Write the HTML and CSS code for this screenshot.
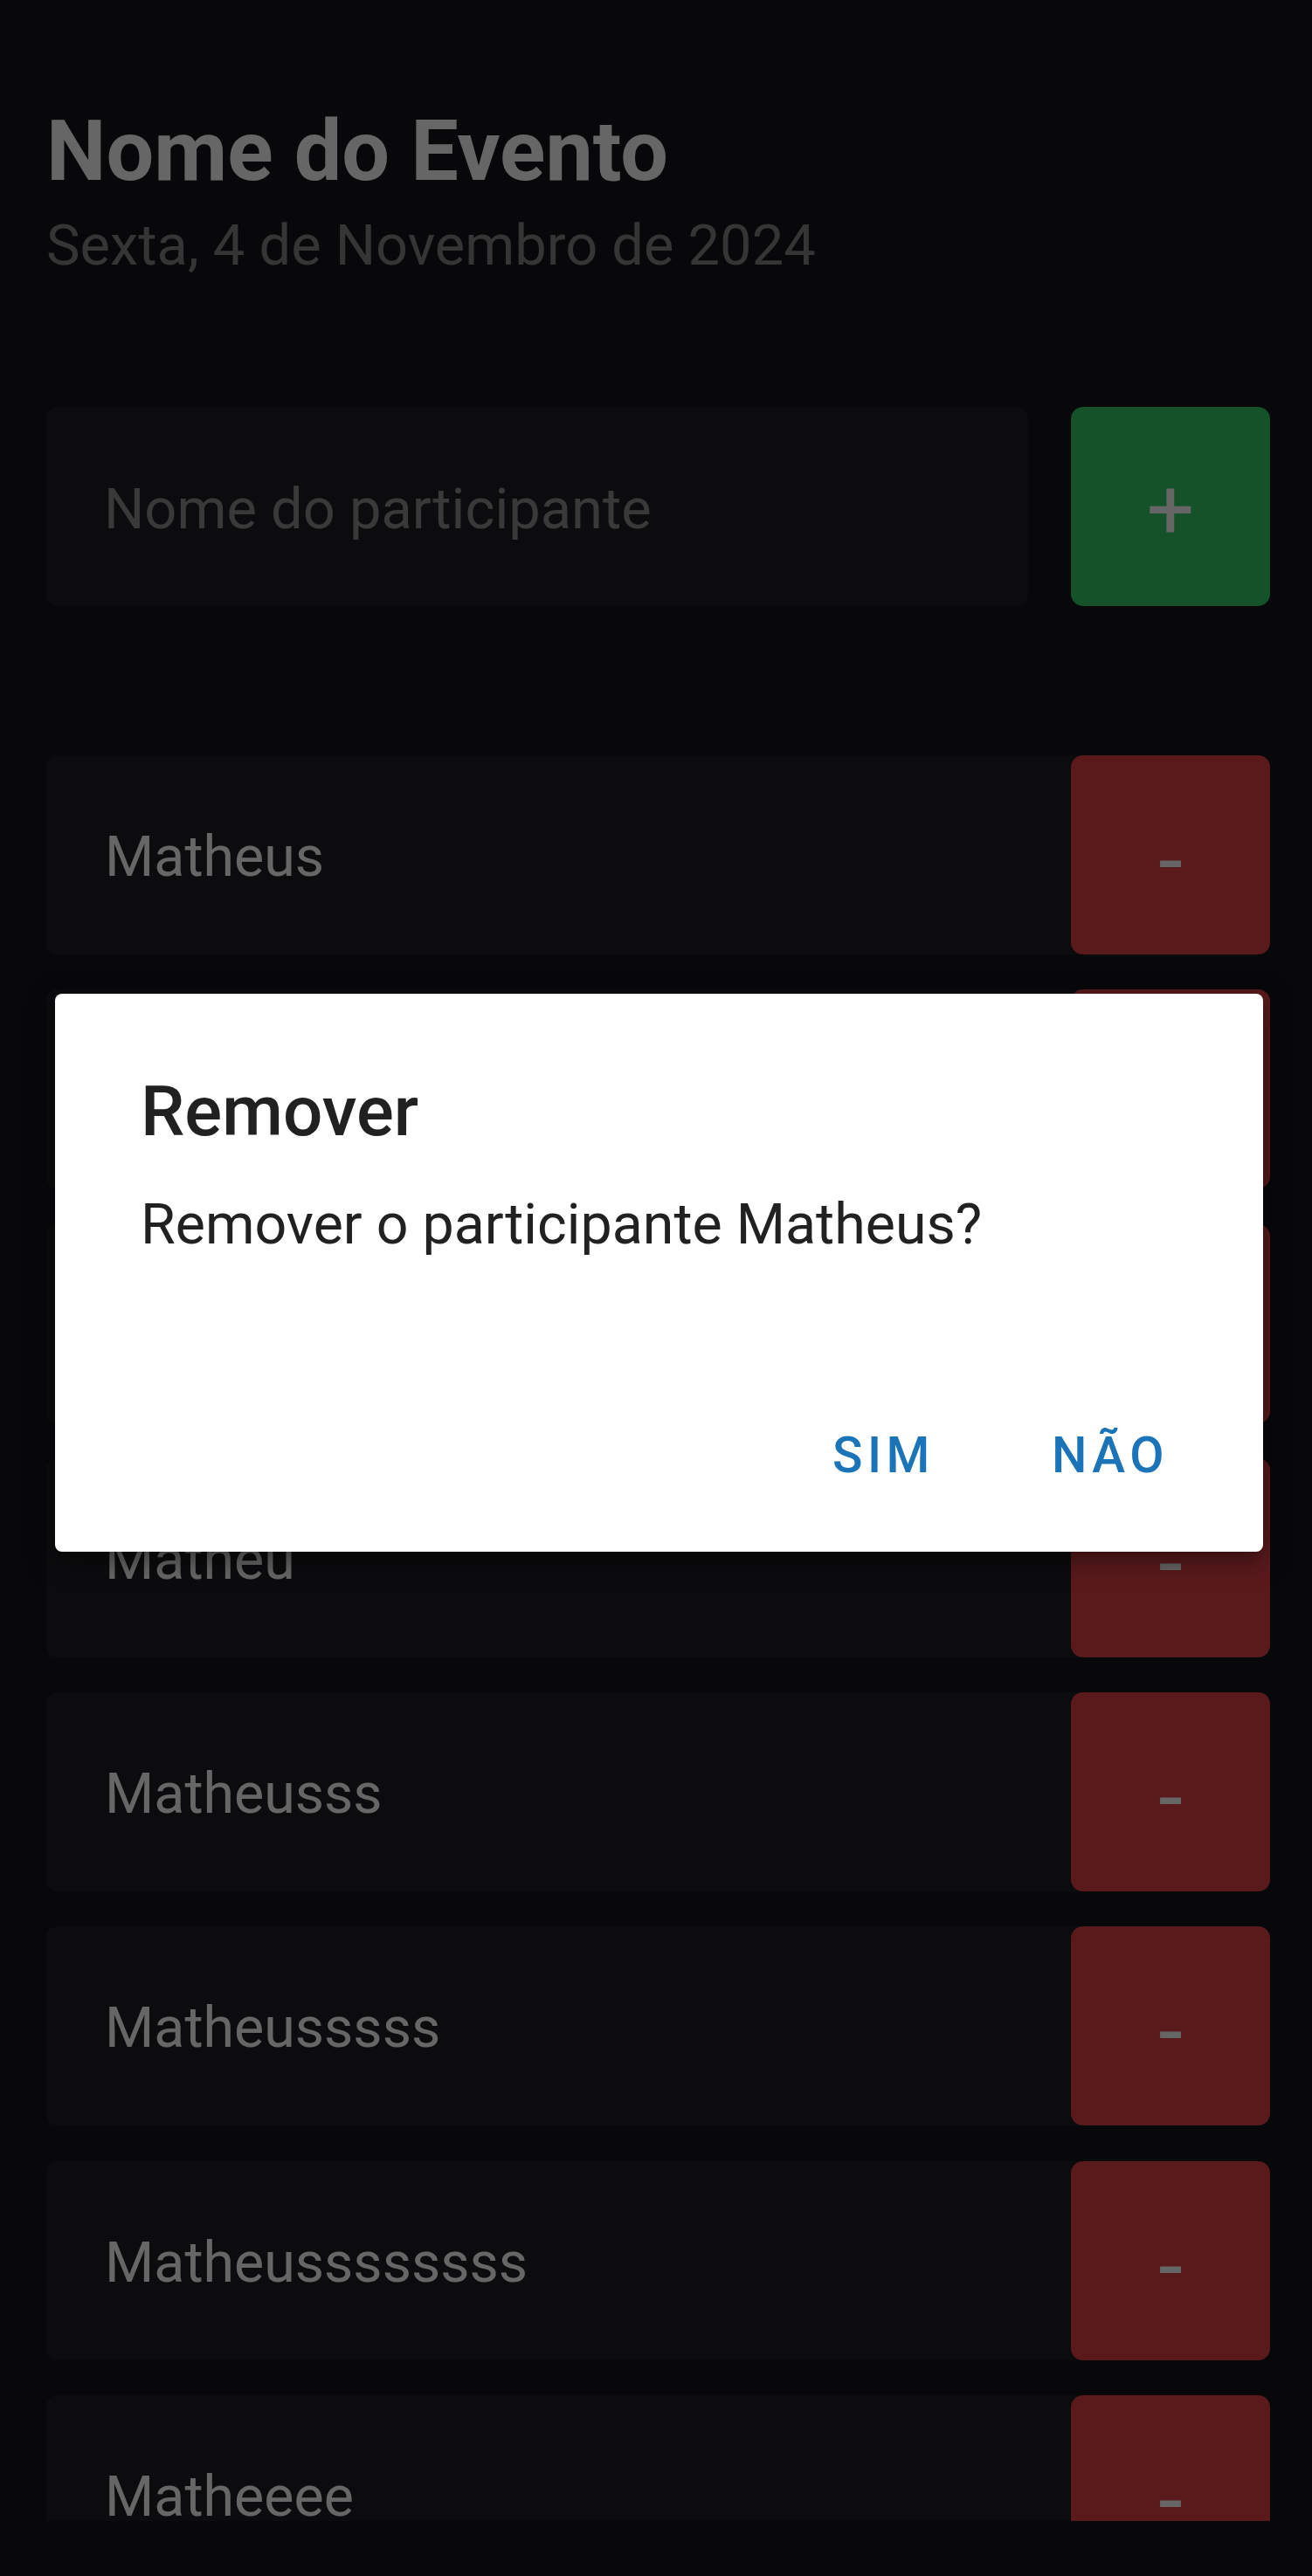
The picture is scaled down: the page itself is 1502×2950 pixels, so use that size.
FILE: index.html
```html
<!DOCTYPE html>
<html lang="pt-BR">
<head>
<meta charset="utf-8">
<title>Nome do Evento</title>
<link rel="stylesheet" href="styles.css">
</head>
<body>
<main class="screen">
  <header class="header">
    <h1 class="event-name">Nome do Evento</h1>
    <p class="event-date">Sexta, 4 de Novembro de 2024</p>
  </header>

  <form class="add-form">
    <div class="input">Nome do participante</div>
    <button type="button" class="btn btn-add">+</button>
  </form>

  <ul class="list">
    <li class="row"><span class="row-name">Matheus</span><button type="button" class="btn btn-remove">-</button></li>
    <li class="row"><span class="row-name">Mat</span><button type="button" class="btn btn-remove">-</button></li>
    <li class="row"><span class="row-name">Math</span><button type="button" class="btn btn-remove">-</button></li>
    <li class="row"><span class="row-name">Matheu</span><button type="button" class="btn btn-remove">-</button></li>
    <li class="row"><span class="row-name">Matheusss</span><button type="button" class="btn btn-remove">-</button></li>
    <li class="row"><span class="row-name">Matheusssss</span><button type="button" class="btn btn-remove">-</button></li>
    <li class="row"><span class="row-name">Matheussssssss</span><button type="button" class="btn btn-remove">-</button></li>
    <li class="row"><span class="row-name">Matheeee</span><button type="button" class="btn btn-remove">-</button></li>
  </ul>
</main>

<div class="scrim">
  <div class="dialog" role="dialog">
    <h2 class="dialog-title">Remover</h2>
    <p class="dialog-text">Remover o participante Matheus?</p>
    <div class="dialog-actions">
      <button type="button" class="dialog-btn">SIM</button>
      <button type="button" class="dialog-btn">NÃO</button>
    </div>
  </div>
</div>
</body>
</html>
```

FILE: styles.css
```css
* { box-sizing: border-box; }

html, body {
  margin: 0;
  padding: 0;
}

body {
  width: 1502px;
  height: 2950px;
  overflow: hidden;
  background: #141219;
  font-family: Roboto, "Noto Sans", "Liberation Sans", sans-serif;
  position: relative;
}

.screen {
  padding: 125px 48px 0 53px;
  display: flex;
  flex-direction: column;
}

.header {
  display: flex;
  flex-direction: column;
}

.event-name {
  margin: 0;
  font-size: 97px;
  line-height: 97px;
  font-weight: 700;
  color: #ffffff;
}

.event-date {
  margin: 27px 0 0 0;
  font-size: 65px;
  line-height: 65px;
  font-weight: 400;
  color: #848484;
}

.add-form {
  margin: 152px 0 0 0;
  display: flex;
  gap: 49px;
  height: 228px;
}

.input {
  flex: 1;
  background: #1e1e23;
  border-radius: 12px;
  display: flex;
  align-items: center;
  padding: 6px 0 0 66px;
  font-size: 65px;
  line-height: 65px;
  color: #8e8e8e;
}

.btn {
  border: 0;
  margin: 0;
  padding: 0;
  width: 228px;
  height: 228px;
  flex: none;
  border-radius: 14px;
  font-family: Roboto, "Noto Sans", "Liberation Sans", sans-serif;
  color: #ffffff;
  display: flex;
  align-items: center;
  justify-content: center;
}

.btn-add {
  background: #37cd66;
  font-size: 96px;
  line-height: 96px;
  padding-top: 8px;
}

.btn-remove {
  background: #e14146;
  font-size: 100px;
  line-height: 100px;
  padding-top: 14px;
}

.list {
  list-style: none;
  margin: 171px 0 0 0;
  padding: 0;
  height: 2022px;
  overflow: hidden;
  display: flex;
  flex-direction: column;
  gap: 40.3px;
}

.row {
  flex: none;
  height: 228px;
  display: flex;
  align-items: center;
  background: #1e1e23;
  border-radius: 12px;
}

.row-name {
  flex: 1;
  padding: 5px 0 0 67px;
  font-size: 64.5px;
  line-height: 65px;
  color: #ffffff;
}

.scrim {
  position: absolute;
  inset: 0;
  background: rgba(0, 0, 0, 0.6);
}

.dialog {
  margin: 1138px 0 0 63px;
  width: 1383px;
  height: 639px;
  background: #ffffff;
  border-radius: 8px;
  box-shadow: 0 8px 30px rgba(0, 0, 0, 0.5);
  padding: 95px 108px 0 98px;
  display: flex;
  flex-direction: column;
}

.dialog-title {
  margin: 0;
  font-size: 80px;
  line-height: 80px;
  font-weight: 500;
  color: #212121;
}

.dialog-text {
  margin: 57px 0 0 0;
  font-size: 64.5px;
  line-height: 64.5px;
  font-weight: 400;
  color: #212121;
}

.dialog-actions {
  margin-top: 203px;
  display: flex;
  justify-content: flex-end;
  gap: 134px;
}

.dialog-btn {
  border: 0;
  background: none;
  margin: 0;
  padding: 0;
  font-family: Roboto, "Noto Sans", "Liberation Sans", sans-serif;
  font-size: 57px;
  line-height: 57px;
  font-weight: 500;
  letter-spacing: 5.5px;
  color: #1b74b8;
}
```
